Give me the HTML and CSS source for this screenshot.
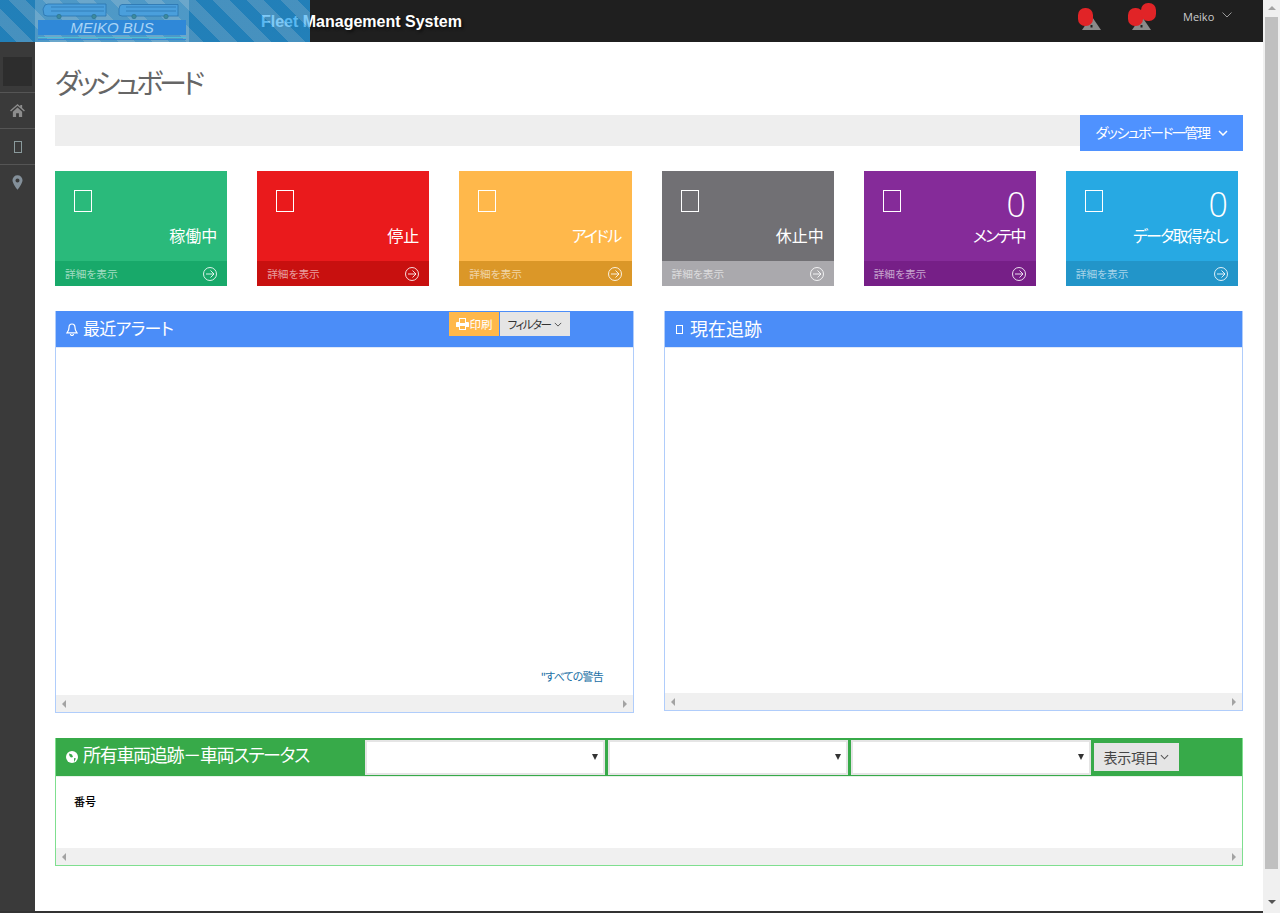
FILE: index.html

```html
<html>
<head>
  <meta charset="UTF-8">
  <title>ダッシュボード</title>
  <link rel="stylesheet" href="styles.css">
</head>
<body>

<div class="window">

  <header class="top">
    <div class="brand">Fleet Management System</div>
    <div class="alert one">
      <svg class="warn" viewBox="0 0 19 14"><path d="M9.5 0L19 14H0z" fill="#8a8a8a"/><rect x="8.500" y="9" width="2" height="2.500" fill="#222"/></svg>
      <span class="blob first"></span>
    </div>
    <div class="alert two">
      <svg class="warn" viewBox="0 0 19 14"><path d="M9.5 0L19 14H0z" fill="#8a8a8a"/><rect x="8.500" y="9" width="2" height="2.500" fill="#222"/></svg>
      <span class="blob first"></span>
      <span class="blob second"></span>
    </div>
    <div class="user">Meiko
      <svg class="user-caret" viewBox="0 0 10 6"><path d="M.5.5L5 5 9.500.5" fill="none" stroke="#999" stroke-width="1"/></svg>
    </div>
  </header>

  <!-- striped layer sits over the header, so the title shows through it -->
  <div class="logo-layer">
    <div class="logo">
      <svg class="logo-art" viewBox="0 0 154 42">
        <g fill="#4a9fdc" stroke="#2a74ae" stroke-width=".8">
          <path d="M13 4h58v12H12l-3-1-1-6 2-4z"/>
          <path d="M87 4.500h56v11.500H87l-3-1v-6l1-3.500z"/>
        </g>
        <g fill="none" stroke="#2a74ae" stroke-width=".7">
          <path d="M16 7h53M16 11h53M91 7h50M91 11h50"/>
        </g>
        <g fill="#3b8a9c" stroke="#2a6f90" stroke-width=".6">
          <circle cx="24" cy="16.500" r="2.200"/><circle cx="59" cy="16.500" r="2.200"/>
          <circle cx="99" cy="16.500" r="2.200"/><circle cx="131" cy="16.500" r="2.200"/>
        </g>
        <rect x="3" y="20" width="148" height="15" fill="#2f88d8"/>
        <rect x="3" y="37" width="148" height="1" fill="#4cc0d8"/>
        <rect x="3" y="39" width="148" height="1" fill="#2f88d8"/>
        <text class="logo-name" x="77" y="33" text-anchor="middle">MEIKO BUS</text>
      </svg>
    </div>
  </div>

  <div class="wrap">

    <nav class="side">
      <div class="side-head"><span class="side-block"></span></div>
      <a class="side-item">
        <svg class="side-home" viewBox="0 0 16 14"><path d="M8 0L0 7l1 1 7-6 7 6 1-1-3-2.600V1h-2v1.700zM3 8.300l5-4.400 5 4.400V14H9.500v-4h-3v4H3z" fill="#8d8d8d"/></svg>
      </a>
      <a class="side-item"><span class="side-tofu"></span></a>
      <a class="side-item">
        <svg class="side-pin" viewBox="0 0 12 16"><path fill-rule="evenodd" d="M6 0a5.500 5.500 0 0 0-5.500 5.500C.5 9 6 16 6 16s5.500-7 5.500-10.500A5.500 5.500 0 0 0 6 0zm0 3.500a2.200 2.200 0 1 1 0 4.400 2.200 2.200 0 0 1 0-4.400z" fill="#84909a"/></svg>
      </a>
    </nav>

    <main class="main">

      <h1 class="title">ダッシュボード</h1>

      <div class="bar">
        <button class="bar-btn"><span class="bar-text">ダッシュボード一管理</span>
          <svg class="bar-caret" viewBox="0 0 10 6"><path d="M1 1l4 4 4-4" fill="none" stroke="#fff" stroke-width="1.500"/></svg>
        </button>
      </div>

      <section class="stats">

        <div class="stat green">
          <div class="stat-body"><span class="tofu"></span><div class="stat-num"></div><div class="stat-label">稼働中</div></div>
          <div class="stat-foot">詳細を表示<svg class="go" viewBox="0 0 14 14"><circle cx="7" cy="7" r="6.500"/><path d="M3 7h8M7.500 3.500L11 7l-3.500 3.500"/></svg></div>
        </div>

        <div class="stat red">
          <div class="stat-body"><span class="tofu"></span><div class="stat-num"></div><div class="stat-label">停止</div></div>
          <div class="stat-foot">詳細を表示<svg class="go" viewBox="0 0 14 14"><circle cx="7" cy="7" r="6.500"/><path d="M3 7h8M7.500 3.500L11 7l-3.500 3.500"/></svg></div>
        </div>

        <div class="stat orange">
          <div class="stat-body"><span class="tofu"></span><div class="stat-num"></div><div class="stat-label kana">アイドル</div></div>
          <div class="stat-foot">詳細を表示<svg class="go" viewBox="0 0 14 14"><circle cx="7" cy="7" r="6.500"/><path d="M3 7h8M7.500 3.500L11 7l-3.500 3.500"/></svg></div>
        </div>

        <div class="stat gray">
          <div class="stat-body"><span class="tofu"></span><div class="stat-num"></div><div class="stat-label">休止中</div></div>
          <div class="stat-foot">詳細を表示<svg class="go" viewBox="0 0 14 14"><circle cx="7" cy="7" r="6.500"/><path d="M3 7h8M7.500 3.500L11 7l-3.500 3.500"/></svg></div>
        </div>

        <div class="stat purple">
          <div class="stat-body"><span class="tofu"></span><div class="stat-num">0</div><div class="stat-label kana">メンテ中</div></div>
          <div class="stat-foot">詳細を表示<svg class="go" viewBox="0 0 14 14"><circle cx="7" cy="7" r="6.500"/><path d="M3 7h8M7.500 3.500L11 7l-3.500 3.500"/></svg></div>
        </div>

        <div class="stat blue">
          <div class="stat-body"><span class="tofu"></span><div class="stat-num">0</div><div class="stat-label kana">データ取得なし</div></div>
          <div class="stat-foot">詳細を表示<svg class="go" viewBox="0 0 14 14"><circle cx="7" cy="7" r="6.500"/><path d="M3 7h8M7.500 3.500L11 7l-3.500 3.500"/></svg></div>
        </div>

      </section>

      <section class="panels">

        <div class="panel alerts">
          <div class="panel-head">
            <svg class="bell" viewBox="0 0 12 13"><path d="M6 1C3.800 1 3 2.800 3 4.500 3 7.500 1.500 9 1 9.800h10C10.500 9 9 7.500 9 4.500 9 2.800 8.200 1 6 1zM4.500 11a1.500 1.500 0 0 0 3 0" fill="none" stroke="#fff" stroke-width="1.200"/></svg>
            <span class="panel-title">最近アラート</span>
            <div class="tools">
              <button class="tool print">
                <svg class="printer" viewBox="0 0 13 12"><path fill-rule="evenodd" d="M3 0h7v4h2a1 1 0 0 1 1 1v4h-3v3H3V9H0V5a1 1 0 0 1 1-1h2zm1 1v4h5V1zm0 7v3h5V8z" fill="#fff"/></svg>印刷</button>
              <button class="tool filter"><span class="filter-text">フィルター</span>
                <svg class="tool-caret" viewBox="0 0 10 6"><path d="M1 1l4 4 4-4" fill="none" stroke="#444" stroke-width="1.100"/></svg>
              </button>
            </div>
          </div>
          <div class="panel-body"><a class="all-link">"すべての警告</a></div>
          <div class="hscroll"><i class="arrow-l"></i><i class="arrow-r"></i></div>
        </div>

        <div class="panel tracking">
          <div class="panel-head">
            <span class="head-tofu"></span>
            <span class="panel-title">現在追跡</span>
          </div>
          <div class="panel-body"></div>
          <div class="hscroll"><i class="arrow-l"></i><i class="arrow-r"></i></div>
        </div>

      </section>

      <section class="panel fleet">
        <div class="fleet-head">
          <svg class="globe" viewBox="0 0 12 12"><circle cx="6" cy="6" r="6" fill="#fff"/><path d="M3 2.500l3 1 1 2.500-2 .5L3.500 5zM8 7l2 .5L8 11z" fill="#37aa49"/></svg>
          <span class="fleet-title">所有車両追跡－車両ステータス</span>
          <div class="pick"><select class="pick-box"></select></div>
          <div class="pick"><select class="pick-box"></select></div>
          <div class="pick"><select class="pick-box"></select></div>
          <button class="columns">表示項目<svg class="columns-caret" viewBox="0 0 10 6"><path d="M1 1l4 4 4-4" fill="none" stroke="#555" stroke-width="1.200"/></svg></button>
        </div>
        <div class="fleet-body"><b class="col-name">番号</b></div>
        <div class="hscroll"><i class="arrow-l"></i><i class="arrow-r"></i></div>
      </section>

    </main>
  </div>

  <div class="edge"></div>
</div>

<div class="scrollbar">
  <i class="sb-up"></i>
  <div class="sb-thumb"></div>
  <i class="sb-down"></i>
</div>

</body>
</html>
```

FILE: styles.css

```css
html, body { margin: 0; padding: 0; height: 913px; overflow: hidden; }
body {
  display: flex;
  font: 13px "Noto Sans CJK JP", "Open Sans", sans-serif;
  color: #333;
  background: #fff;
  font-feature-settings: "palt";
}
button { font: inherit; border: 0; padding: 0; margin: 0; }

.window { position: relative; flex: 1; display: flex; flex-direction: column; min-width: 0; }

/* top bar */
.top {
  height: 42px;
  flex: none;
  background: #1f1f1f;
  display: flex;
  align-items: center;
  padding-left: 261px;
}
.brand {
  font: bold 16px "Liberation Sans", Arial, sans-serif;
  color: #fff;
  text-shadow: 2px 2px 3px rgba(0,0,0,.6);
  width: 817px;
  flex: none;
  margin-top: 1px;
}
.alert { position: relative; width: 50px; height: 42px; flex: none; }
.warn { position: absolute; left: 4px; top: 16px; width: 19px; height: 14px; }
.blob { position: absolute; width: 15px; height: 18px; border-radius: 7px; background: #e12427; }
.blob.first { left: 0; top: 8px; }
.blob.second { left: 13px; top: 3px; }
.user {
  margin-left: 5px;
  font: 11px "Open Sans", sans-serif;
  color: #ccc;
  display: flex;
  align-items: center;
  margin-top: -9px;
}
.user-caret { width: 10px; height: 6px; margin-left: 8px; margin-top: -3px; }

.logo-layer {
  position: absolute;
  left: 0;
  top: 0;
  width: 310px;
  height: 42px;
  padding-left: 35px;
  box-sizing: border-box;
  background: repeating-linear-gradient(45deg, rgba(35,160,236,.75) 0, rgba(35,160,236,.75) 12px, rgba(84,183,244,.75) 12px, rgba(84,183,244,.75) 24px);
}
.logo { width: 154px; height: 42px; background: rgba(255,255,255,.2); }
.logo-art { display: block; width: 154px; height: 42px; }
.logo-name { font: italic 15px "Liberation Sans", sans-serif; fill: #a9d4f5; }

/* sidebar */
.wrap { flex: 1; display: flex; min-height: 0; }
.side { width: 35px; flex: none; background: #3a3a3a; }
.side-head { height: 51px; padding: 15px 3px 0; box-sizing: border-box; border-bottom: 1px solid #555; }
.side-block { display: block; width: 29px; height: 29px; background: #2d2d2d; }
.side-item {
  display: flex;
  align-items: center;
  justify-content: center;
  height: 35px;
  border-bottom: 1px solid #555;
}
.side-item:last-child { border-bottom: 0; }
.side-home { width: 15px; height: 13px; }
.side-pin { width: 11px; height: 15px; }
.side-tofu { width: 6px; height: 10px; border: 1px solid #8a9a9c; }

/* main */
.main { flex: 1; min-width: 0; padding: 0 20px; }
.title {
  margin: 0;
  padding: 20px 0 13px;
  font-size: 28px;
  font-weight: 400;
  line-height: 40px;
  letter-spacing: -4px;
  color: #666;
}
.bar { height: 31px; background: #eee; display: flex; justify-content: flex-end; align-items: flex-start; }
.bar-btn {
  width: 163px;
  height: 36px;
  flex: none;
  background: #4f92ff;
  color: #fff;
  font-size: 14px;
  display: flex;
  align-items: center;
  justify-content: center;
}
.bar-text { letter-spacing: -1.5px; margin-top: -3px; }
.bar-caret { width: 10px; height: 6px; margin-left: 8px; }

/* stat cards */
.stats {
  display: grid;
  grid-template-columns: repeat(6, 1fr);
  gap: 30px;
  margin: 25px 5px 0 0;
}
.stat-body { height: 90px; padding: 19px 10px 0 19px; box-sizing: border-box; color: #fff; }
.tofu { display: block; width: 16px; height: 20px; border: 1px solid #fff; }
.stat-num {
  height: 0;
  text-align: right;
  font: 300 34px/34px "Open Sans", sans-serif;
  margin-top: -25px;
}
.stat-label { margin-top: 36px; text-align: right; font-size: 16px; line-height: 24px; }
.stat-label.kana { letter-spacing: -1.7px; padding-right: 1px; }
.stat-foot {
  height: 25px;
  padding: 0 10px;
  display: flex;
  align-items: center;
  justify-content: space-between;
  font-size: 10.7px;
  color: rgba(255,255,255,.6);
}
.go { width: 14px; height: 14px; fill: none; stroke: rgba(255,255,255,.85); stroke-width: 1; }

.green .stat-body { background: #2aba7b; }
.green .stat-foot { background: #18a96a; }
.red .stat-body { background: #ea1a1c; }
.red .stat-foot { background: #c8100f; }
.orange .stat-body { background: #ffb84b; }
.orange .stat-foot { background: #db9728; }
.gray .stat-body { background: #717074; }
.gray .stat-foot { background: #aaa9ad; }
.purple .stat-body { background: #852b99; }
.purple .stat-foot { background: #761f87; }
.blue .stat-body { background: #27a9e3; }
.blue .stat-foot { background: #2295c9; }

/* panels */
.panels {
  display: grid;
  grid-template-columns: 1fr 1fr;
  gap: 30px;
  margin-top: 25px;
  align-items: start;
}
.panel { border: 1px solid #b0cdfb; border-top: 0; display: flex; flex-direction: column; box-sizing: border-box; }
.alerts { height: 402px; }
.tracking { height: 400px; }
.panel-head {
  height: 36px;
  flex: none;
  background: #4b8df8;
  display: flex;
  align-items: flex-start;
  padding-left: 10px;
  color: #fff;
  border-bottom: 1px solid #dfe8f8;
}
.bell { width: 12px; height: 13px; margin: 12px 5px 0 0; }
.head-tofu { width: 5px; height: 7px; border: 1px solid #fff; margin: 14px 7px 0 1px; }
.panel-title { font-size: 18px; line-height: 34px; }
.alerts .panel-title { font-size: 17px; letter-spacing: -.7px; }
.tools { display: flex; margin-left: auto; margin-right: 63px; margin-top: 1px; }
.tool { height: 24px; font-size: 11.5px; display: flex; align-items: center; justify-content: center; }
.print { width: 50px; background: #ffb84b; color: #fff; margin-right: 1px; }
.printer { width: 13px; height: 12px; margin-right: 1px; }
.filter { width: 70px; background: #e5e5e5; color: #333; }
.filter-text { letter-spacing: -1.5px; }
.tool-caret { width: 8px; height: 5px; margin-left: 4px; }
.panel-body { flex: 1; display: flex; align-items: flex-end; justify-content: flex-end; min-height: 0; }
.all-link { font-size: 11px; line-height: 16px; letter-spacing: -.8px; color: #1a6fa5; margin: 0 30px 11px 0; }

.hscroll {
  height: 17px;
  flex: none;
  background: #f0f0f0;
  display: flex;
  align-items: center;
  justify-content: space-between;
  padding: 0 5px;
}
.arrow-l { border: 4px solid transparent; border-right: 4px solid #a3a3a3; border-left: 0; margin-left: 1px; }
.arrow-r { border: 4px solid transparent; border-left: 4px solid #a3a3a3; border-right: 0; margin-right: 1px; }

/* fleet table */
.fleet { margin-top: 25px; border-color: #7fdf8f; height: 128px; }
.fleet-head {
  height: 36px;
  padding: 2px 0 0 10px;
  flex: none;
  background: #37aa49;
  display: flex;
  align-items: flex-start;
  border-bottom: 1px solid #e6f3e8;
}
.globe { width: 12px; height: 12px; flex: none; margin: 11px 5px 0 0; }
.fleet-title { width: 282px; flex: none; font-size: 18px; line-height: 29px; color: #fff; letter-spacing: -1.3px; white-space: nowrap; }
.pick { position: relative; width: 240px; height: 35px; margin-right: 3px; flex: none; }
.pick-box {
  display: block;
  width: 100%;
  height: 100%;
  box-sizing: border-box;
  border: 2px solid #e5e5e5;
  border-radius: 0;
  background: #fff;
  appearance: none;
}
.pick::after {
  content: "";
  position: absolute;
  right: 7px;
  top: 14px;
  border: 3px solid transparent;
  border-top: 6px solid #333;
  border-bottom: 0;
}
.columns {
  width: 85px;
  height: 28px;
  margin-top: 3px;
  background: #e5e5e5;
  color: #444;
  font-size: 14px;
  letter-spacing: -.3px;
  display: flex;
  align-items: center;
  justify-content: center;
}
.columns-caret { width: 9px; height: 6px; margin-left: 2px; }
.fleet-body { flex: 1; padding: 16px 18px 0; min-height: 0; }
.col-name { display: block; font-size: 11px; font-weight: 500; line-height: 16px; color: #000; }

/* window bottom + page scrollbar */
.edge { height: 2px; flex: none; background: #333; }
.scrollbar {
  width: 17px;
  flex: none;
  background: #f0f0f0;
  display: flex;
  flex-direction: column;
  align-items: flex-start;
  padding-left: 2px;
  box-sizing: border-box;
}
.sb-thumb { width: 13px; height: 852px; background: #c0c0c0; }
.sb-up { flex: none; box-sizing: border-box; margin: 6px 0 7px 3px; border: 4px solid transparent; border-bottom: 4px solid #a3a3a3; border-top: 0; height: 4px; }
.sb-down { flex: none; box-sizing: border-box; margin: 31px 0 0 3px; border: 4px solid transparent; border-top: 4px solid #555; border-bottom: 0; height: 4px; }
```
